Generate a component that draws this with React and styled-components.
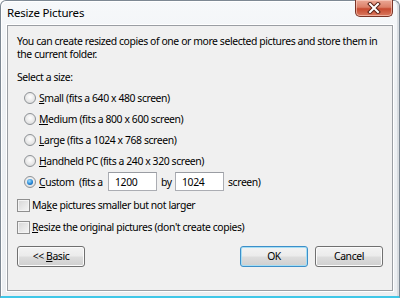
import React from "react";
import styled, { createGlobalStyle } from "styled-components";

const Global = createGlobalStyle`
  html, body { margin: 0; padding: 0; background: #ffffff; }
  body {
    font-family: "Noto Sans", "Open Sans", sans-serif;
    font-size: 10.4px;
    letter-spacing: -0.4px;
    color: #000;
  }
  * { box-sizing: border-box; }
`;

const Window = styled.div`
  width: 400px;
  height: 298px;
  display: flex;
  flex-direction: column;
  border: 1px solid #7d8893;
  border-bottom: 2px solid #3fc7e8;
  border-radius: 6px 6px 0 0;
  background: linear-gradient(#f6f8fa, #eef1f4 30%, #eceff2);
  box-shadow: inset 1px 1px 0 #ffffff, inset -2px 0 0 #d9dde1;
`;

const TitleBar = styled.div`
  height: 24px;
  display: flex;
  align-items: flex-start;
  justify-content: space-between;
  padding-left: 6px;
  padding-right: 6px;
`;

const Title = styled.div`
  font-size: 11.5px;
  letter-spacing: -0.2px;
  line-height: 12px;
  margin-top: 6px;
  color: #000;
`;

const CloseButton = styled.div`
  width: 38px;
  height: 17px;
  margin-top: -1px;
  border: 1px solid #7a3426;
  border-top: none;
  border-radius: 0 0 5px 5px;
  background: linear-gradient(#eba896, #dc8068 45%, #c74a30 55%, #da7a60);
  box-shadow: inset 0 0 0 1px rgba(255, 220, 210, 0.55);
  display: flex;
  align-items: center;
  justify-content: center;
`;

const Client = styled.div`
  flex: 1;
  margin: 0 6px 5px 6px;
  border: 1px solid #9a9ea3;
  box-shadow: 0 0 0 1px #ffffff;
  background: #f0f0f0;
  padding: 9px 9px 0 9px;
  display: flex;
  flex-direction: column;
`;

const Intro = styled.p`
  margin: 0 -8px 0 0;
  line-height: 13px;
`;

const SectionLabel = styled.div`
  margin-top: 10px;
  line-height: 13px;
`;

const RadioList = styled.div`
  margin-top: 3px;
  padding-left: 7px;
  display: flex;
  flex-direction: column;
`;

const OptionRow = styled.label`
  height: ${(p) => p.$h || 21}px;
  display: flex;
  align-items: center;
  white-space: pre;
`;

const RadioDot = styled.span`
  width: 12px;
  height: 12px;
  border-radius: 50%;
  border: 1px solid #8e9296;
  background: radial-gradient(circle at 50% 40%, #ffffff, #e6e6e6 60%, #cfd1d3);
  margin-right: 3px;
  display: flex;
  align-items: center;
  justify-content: center;
  flex-shrink: 0;
  &::after {
    content: "";
    display: ${(p) => (p.$checked ? "block" : "none")};
    width: 6px;
    height: 6px;
    border-radius: 50%;
    background: radial-gradient(circle at 40% 35%, #9fe0ff, #1e7ed0 60%, #0b4f9a);
  }
`;

const Box = styled.span`
  width: 13px;
  height: 13px;
  border: 1px solid #8f8f8f;
  background: linear-gradient(135deg, #d6d6d6, #f6f6f6);
  box-shadow: inset 0 0 0 1px #f4f4f4;
  margin-right: 2px;
  flex-shrink: 0;
`;

const Key = styled.span`
  text-decoration: underline;
`;

const Field = styled.div`
  width: 49px;
  height: 19px;
  border: 1px solid #abadb3;
  border-top-color: #9a9da3;
  background: #ffffff;
  padding-left: 6px;
  display: flex;
  align-items: center;
  margin: 0 ${(p) => p.$mr || 0}px 0 ${(p) => p.$ml || 0}px;
`;

const CheckList = styled.div`
  margin-top: 2px;
  display: flex;
  flex-direction: column;
`;

const ButtonRow = styled.div`
  margin-top: 8px;
  display: flex;
  align-items: center;
  gap: 7px;
`;

const Button = styled.div`
  width: 68px;
  height: 21px;
  border: 1px solid ${(p) => (p.$default ? "#3c8fc9" : "#707070")};
  border-radius: 3px;
  background: linear-gradient(#f3f3f3 0%, #ebebeb 48%, #dddddd 52%, #cfcfcf 100%);
  box-shadow: inset 0 0 0 1px ${(p) => (p.$default ? "#a6def4" : "#fbfbfb")};
  display: flex;
  align-items: center;
  justify-content: center;
  line-height: 1;
  white-space: pre;
`;

const Spacer = styled.div`
  flex: 1;
`;

export default function App() {
  return (
    <>
      <Global />
      <Window>
        <TitleBar>
          <Title>Resize Pictures</Title>
          <CloseButton>
            <svg width="14" height="12" viewBox="0 0 14 12">
              <path d="M3 2 L11 10 M11 2 L3 10" stroke="#5a2218" strokeWidth="4" strokeLinecap="square" />
              <path d="M3 2 L11 10 M11 2 L3 10" stroke="#ffffff" strokeWidth="2" strokeLinecap="square" />
            </svg>
          </CloseButton>
        </TitleBar>
        <Client>
          <Intro>
            You can create resized copies of one or more selected pictures and store them in the current folder.
          </Intro>
          <SectionLabel>Select a size:</SectionLabel>
          <RadioList>
            <OptionRow>
              <RadioDot />
              <span><Key>S</Key>mall (fits a 640 x 480 screen)</span>
            </OptionRow>
            <OptionRow>
              <RadioDot />
              <span><Key>M</Key>edium (fits a 800 x 600 screen)</span>
            </OptionRow>
            <OptionRow>
              <RadioDot />
              <span><Key>L</Key>arge (fits a 1024 x 768 screen)</span>
            </OptionRow>
            <OptionRow>
              <RadioDot />
              <span><Key>H</Key>andheld PC (fits a 240 x 320 screen)</span>
            </OptionRow>
            <OptionRow>
              <RadioDot $checked />
              <span><Key>C</Key>ustom  (fits a </span>
              <Field $ml={3} $mr={4}>1200</Field>
              <span>by </span>
              <Field $ml={1} $mr={4}>1024</Field>
              <span>screen)</span>
            </OptionRow>
          </RadioList>
          <CheckList>
            <OptionRow $h={22}>
              <Box />
              <span>Ma<Key>k</Key>e pictures smaller but not larger</span>
            </OptionRow>
            <OptionRow $h={22}>
              <Box />
              <span><Key>R</Key>esize the original pictures (don't create copies)</span>
            </OptionRow>
          </CheckList>
          <ButtonRow>
            <Button><span>{"<< "}<Key>B</Key>asic</span></Button>
            <Spacer />
            <Button $default>OK</Button>
            <Button>Cancel</Button>
          </ButtonRow>
        </Client>
      </Window>
    </>
  );
}
